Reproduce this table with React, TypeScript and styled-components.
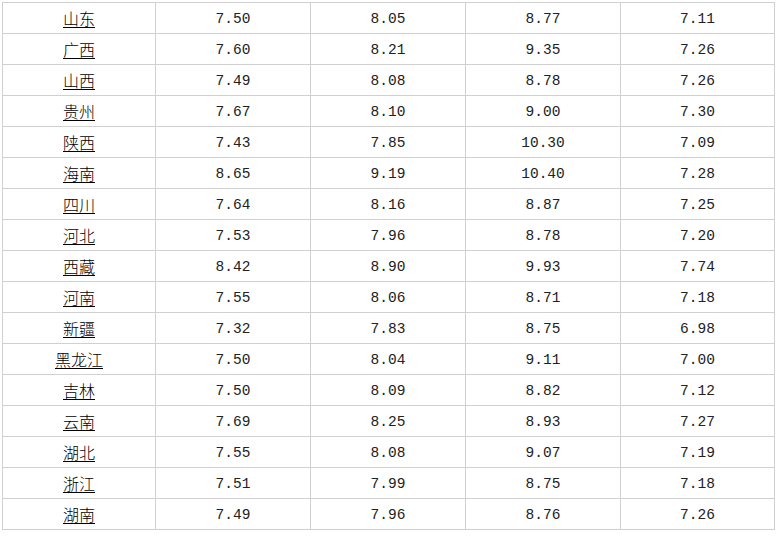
import styled, { createGlobalStyle } from "styled-components";

const GlobalStyle = createGlobalStyle`
  html, body {
    background: #fff;
    margin: 0;
    padding: 0;
  }
`;

const Page = styled.div`
  padding: 2px 0 0 2px;
`;

const Table = styled.table`
  border-collapse: collapse;
  table-layout: fixed;
  width: 773px;
`;

const Cell = styled.td`
  border: 1px solid #d0d0d0;
  color: #222;
  font-family: "Liberation Mono", "DejaVu Sans Mono", monospace;
  font-size: 14.5px;
  height: 28px;
  line-height: 16px;
  padding: 2px 0 0;
  text-align: center;
  vertical-align: middle;
`;

const NameLink = styled.a`
  color: #000;
  font-family: "Noto Sans CJK SC", sans-serif;
  font-size: 16px;
  font-weight: 300;
  line-height: 16px;
  text-decoration: underline;
  text-underline-offset: 2px;
`;

type Row = [string, string, string, string, string];

const rows: Row[] = [
  ["山东", "7.50", "8.05", "8.77", "7.11"],
  ["广西", "7.60", "8.21", "9.35", "7.26"],
  ["山西", "7.49", "8.08", "8.78", "7.26"],
  ["贵州", "7.67", "8.10", "9.00", "7.30"],
  ["陕西", "7.43", "7.85", "10.30", "7.09"],
  ["海南", "8.65", "9.19", "10.40", "7.28"],
  ["四川", "7.64", "8.16", "8.87", "7.25"],
  ["河北", "7.53", "7.96", "8.78", "7.20"],
  ["西藏", "8.42", "8.90", "9.93", "7.74"],
  ["河南", "7.55", "8.06", "8.71", "7.18"],
  ["新疆", "7.32", "7.83", "8.75", "6.98"],
  ["黑龙江", "7.50", "8.04", "9.11", "7.00"],
  ["吉林", "7.50", "8.09", "8.82", "7.12"],
  ["云南", "7.69", "8.25", "8.93", "7.27"],
  ["湖北", "7.55", "8.08", "9.07", "7.19"],
  ["浙江", "7.51", "7.99", "8.75", "7.18"],
  ["湖南", "7.49", "7.96", "8.76", "7.26"],
];

const widths = [153, 155, 155, 155, 154];

export default function App() {
  return (
    <Page>
      <GlobalStyle />
      <Table>
        <colgroup>
          {widths.map((w, i) => (
            <col key={i} style={{ width: w }} />
          ))}
        </colgroup>
        <tbody>
          {rows.map(([name, ...values]) => (
            <tr key={name}>
              <Cell>
                <NameLink href="#">{name}</NameLink>
              </Cell>
              {values.map((v, i) => (
                <Cell key={i}>{v}</Cell>
              ))}
            </tr>
          ))}
        </tbody>
      </Table>
    </Page>
  );
}
